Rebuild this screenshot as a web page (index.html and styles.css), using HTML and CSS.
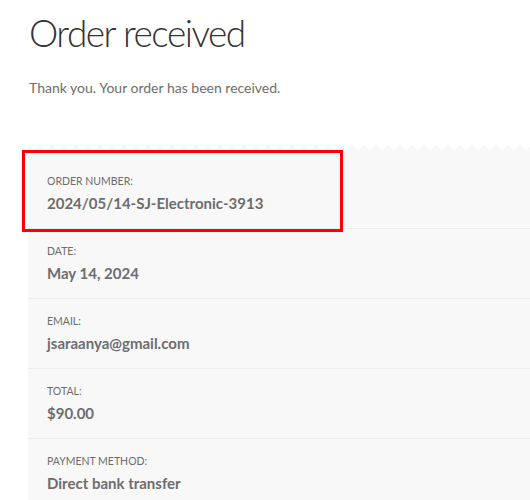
FILE: index.html
```html
<!DOCTYPE html>
<html>
<head>
<meta charset="utf-8">
<link rel="stylesheet" href="styles.css">
</head>
<body>
<main class="page">
  <h1 class="title">Order received</h1>
  <p class="thanks">Thank you. Your order has been received.</p>
  <ul class="overview">
    <li class="item item-first">
      <span class="label">Order number:</span>
      <strong class="value">2024/05/14-SJ-Electronic-3913</strong>
      <span class="highlight"></span>
    </li>
    <li class="item">
      <span class="label">Date:</span>
      <strong class="value">May 14, 2024</strong>
    </li>
    <li class="item">
      <span class="label">Email:</span>
      <strong class="value">jsaraanya@gmail.com</strong>
    </li>
    <li class="item">
      <span class="label">Total:</span>
      <strong class="value">$90.00</strong>
    </li>
    <li class="item">
      <span class="label">Payment method:</span>
      <strong class="value">Direct bank transfer</strong>
    </li>
  </ul>
</main>
</body>
</html>
```

FILE: styles.css
```css
html, body {
  margin: 0;
  padding: 0;
  background: #fff;
  overflow: hidden;
}
body {
  font-family: "Lato", "Open Sans", "Liberation Sans", sans-serif;
  color: #6d6d6d;
}
.page {
  padding-left: 29px;
}
.title {
  margin: 0;
  padding-top: 10px;
  font-weight: 300;
  font-size: 37px;
  line-height: 46px;
  letter-spacing: -1.5px;
  color: #333;
}
.thanks {
  margin: 22px 0 0;
  font-size: 14px;
  line-height: 20px;
  color: #6d6d6d;
}
.overview {
  list-style: none;
  margin: 52px 0 0 -1px;
  padding: 9px 0 0;
  background: #f8f8f8;
  position: relative;
  width: 600px;
}
.overview::before {
  content: "";
  position: absolute;
  left: 0;
  right: 0;
  top: -5px;
  height: 5px;
  background:
    linear-gradient(-45deg, #f8f8f8 4px, transparent 0) 0 100% / 12px 10px repeat-x,
    linear-gradient(45deg, #f8f8f8 4px, transparent 0) 0 100% / 12px 10px repeat-x;
}
.item {
  position: relative;
  display: flex;
  flex-direction: column;
  padding: 14px 19px 13px;
  border-bottom: 1px solid #ededed;
}
.label {
  font-size: 10.5px;
  line-height: 16px;
  text-transform: uppercase;
  color: #6d6d6d;
}
.value {
  margin-top: 2px;
  font-size: 15px;
  line-height: 24px;
  font-weight: 700;
  color: #6d6d6d;
}
.highlight {
  position: absolute;
  left: -6px;
  top: -9px;
  width: 315px;
  height: 76px;
  border: 3px solid #ff0000;
}
```
